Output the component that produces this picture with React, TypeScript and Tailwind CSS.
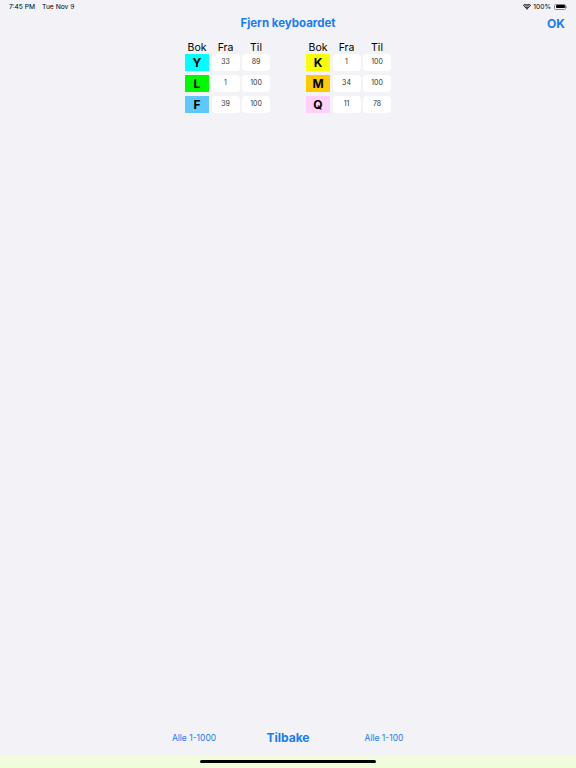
import React from "react";

const left = [
  { l: "Y", c: "bg-[#00ffff]", f: "33", t: "89" },
  { l: "L", c: "bg-[#00f900]", f: "1", t: "100" },
  { l: "F", c: "bg-[#5ec8fa]", f: "39", t: "100" },
];
const right = [
  { l: "K", c: "bg-[#f8ff00]", f: "1", t: "100" },
  { l: "M", c: "bg-[#fdcb00]", f: "34", t: "100" },
  { l: "Q", c: "bg-[#ffd1fa]", f: "11", t: "78" },
];

function Group({ rows }: { rows: typeof left }) {
  return (
    <div className="flex flex-col gap-[4px]">
      <div className="grid grid-cols-[24px_28px_28px] gap-x-[2.5px] -mb-[4px]">
        <div className="text-center text-[10.5px] leading-[12px] text-black">Bok</div>
        <div className="text-center text-[10.5px] leading-[12px] text-black">Fra</div>
        <div className="text-center text-[10.5px] leading-[12px] text-black">Til</div>
      </div>
      {rows.map((r, i) => (
        <div key={i} className="grid grid-cols-[24px_28px_28px] gap-x-[2.5px]">
          <div className={`${r.c} h-[17px] flex items-center justify-center text-[12px] font-bold text-black`}>
            {r.l}
          </div>
          <div className="bg-white rounded-[4px] h-[17px] flex items-center justify-center text-[7px] text-[#333]">
            {r.f}
          </div>
          <div className="bg-white rounded-[4px] h-[17px] flex items-center justify-center text-[7px] text-[#333]">
            {r.t}
          </div>
        </div>
      ))}
    </div>
  );
}

export default function App() {
  return (
    <div
      className="w-[576px] h-[768px] bg-[#f2f2f7] flex flex-col"
      style={{ fontFamily: "Inter, 'Liberation Sans', sans-serif" }}
    >
      <div className="h-[14px] flex items-center justify-between px-[9px] text-[6.7px] text-black">
        <div className="flex gap-[7px]">
          <span>7:45 PM</span>
          <span>Tue Nov 9</span>
        </div>
        <div className="flex items-center gap-[2px]">
          <svg width="8" height="6" viewBox="0 0 16 12">
            <path d="M8 11.5 L10.2 9.1 A3.2 3.2 0 0 0 5.8 9.1 Z" fill="#000" />
            <path d="M3.9 7.2 A5.8 5.8 0 0 1 12.1 7.2 L10.9 8.5 A4 4 0 0 0 5.1 8.5 Z" fill="#000" />
            <path d="M1.7 5 A8.9 8.9 0 0 1 14.3 5 L13.1 6.3 A7.1 7.1 0 0 0 2.9 6.3 Z" fill="#000" />
            <path d="M-0.4 2.8 A12 12 0 0 1 16.4 2.8 L15.2 4.1 A10.2 10.2 0 0 0 0.8 4.1 Z" fill="#000" />
          </svg>
          <span>100%</span>
          <div className="flex items-center ml-[1px]">
            <div className="w-[12px] h-[6px] rounded-[1.5px] border-[0.5px] border-[#888] p-[0.5px]">
              <div className="w-full h-full bg-black rounded-[1px]" />
            </div>
            <div className="w-[1px] h-[2px] bg-[#888] rounded-r-[1px]" />
          </div>
        </div>
      </div>
      <div className="h-[18px] mt-[1px] relative flex items-center justify-center">
        <span className="text-[11.5px] font-bold text-[#1a7cf5]">Fjern keyboardet</span>
        <span className="absolute right-[11px] text-[12px] font-bold text-[#1a7cf5]">OK</span>
      </div>
      <div className="mt-[9px] flex justify-center gap-[36px]">
        <Group rows={left} />
        <Group rows={right} />
      </div>
      <div className="flex-1" />
      <div className="h-[18px] flex items-center pl-[146px] mb-[9px]">
        <div className="w-[96px] text-center text-[8.5px] text-[#1a7cf5]">Alle 1-1000</div>
        <div className="w-[92px] text-center text-[12px] font-bold text-[#1a7cf5]">Tilbake</div>
        <div className="w-[100px] text-center text-[8.5px] text-[#1a7cf5]">Alle 1-100</div>
      </div>
      <div className="h-[12px] bg-[#f0fcdc] flex justify-center pt-[4px]">
        <div className="w-[176px] h-[3px] rounded-full bg-black" />
      </div>
    </div>
  );
}
